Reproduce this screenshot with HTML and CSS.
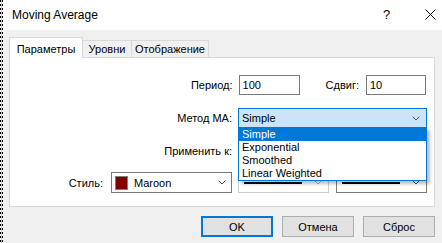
FILE: index.html
```html
<!DOCTYPE html>
<html lang="ru">
<head>
    <meta charset="UTF-8">
    <title>Moving Average</title>
    <link rel="stylesheet" href="styles.css">
</head>
<body>
    <div class="screen">
        <div class="edge"></div>

        <div class="dialog">
            <div class="titlebar">
                <span class="title">Moving Average</span>
                <span class="help">?</span>
                <span class="close">
                    <svg width="11" height="11" viewBox="0 0 11 11">
                        <path d="M0.5 0.5 L10.5 10.5 M10.5 0.5 L0.5 10.5" stroke="#000" stroke-width="1" fill="none"/>
                    </svg>
                </span>
            </div>

            <div class="content">
                <div class="tabs">
                    <div class="tab active">Параметры</div>
                    <div class="tab">Уровни</div>
                    <div class="tab">Отображение</div>
                </div>

                <div class="panel">
                    <div class="row">
                        <label class="label">Период:</label>
                        <div class="field period">100</div>
                        <label class="label shift-label">Сдвиг:</label>
                        <div class="field shift">10</div>
                    </div>

                    <div class="row">
                        <label class="label">Метод МА:</label>
                        <div class="combo wide focused">
                            <span class="combo-text">Simple</span>
                            <svg class="chevron" width="8" height="5" viewBox="0 0 8 5"><path d="M0.5 0.5 L4 4 L7.5 0.5" stroke="#505050" fill="none"/></svg>

                            <ul class="dropdown">
                                <li class="selected">Simple</li>
                                <li>Exponential</li>
                                <li>Smoothed</li>
                                <li>Linear Weighted</li>
                            </ul>
                        </div>
                    </div>

                    <div class="row">
                        <label class="label">Применить к:</label>
                        <!-- hidden behind the open list -->
                        <div class="combo wide"></div>
                    </div>

                    <div class="row">
                        <label class="label style-label">Стиль:</label>
                        <div class="combo color">
                            <span class="swatch"></span>
                            <span class="combo-text">Maroon</span>
                            <svg class="chevron" width="8" height="5" viewBox="0 0 8 5"><path d="M0.5 0.5 L4 4 L7.5 0.5" stroke="#505050" fill="none"/></svg>
                        </div>
                        <div class="combo line disabled">
                            <span class="line-sample"></span>
                            <svg class="chevron" width="8" height="5" viewBox="0 0 8 5"><path d="M0.5 0.5 L4 4 L7.5 0.5" stroke="#b0b0b0" fill="none"/></svg>
                        </div>
                        <div class="combo line">
                            <span class="line-sample"></span>
                            <svg class="chevron" width="8" height="5" viewBox="0 0 8 5"><path d="M0.5 0.5 L4 4 L7.5 0.5" stroke="#505050" fill="none"/></svg>
                        </div>
                    </div>
                </div>

                <div class="buttons">
                    <button class="btn default">OK</button>
                    <button class="btn">Отмена</button>
                    <button class="btn">Сброс</button>
                </div>
            </div>
        </div>
    </div>
</body>
</html>
```

FILE: styles.css
```css
* {
    margin: 0;
    padding: 0;
    box-sizing: border-box;
}

body {
    font-family: 'Liberation Sans', Arial, sans-serif;
    font-size: 11px;
    color: #000;
    background: #f0f0f0;
    overflow: hidden;
}

.screen {
    display: flex;
    width: 442px;
    height: 243px;
}

/* window edge peeking at the left */
.edge {
    width: 3px;
    background:
        linear-gradient(90deg, transparent 1px, #c8c8c8 1px 2px, transparent 2px),
        repeating-linear-gradient(#000 0 2px, #fff 2px 4px);
}

.dialog {
    flex: 1;
    display: flex;
    flex-direction: column;
    background: #f0f0f0;
}

.titlebar {
    height: 30px;
    background: #fff;
    display: flex;
    align-items: center;
}

.title {
    flex: 1;
    font-size: 12px;
    padding-left: 9px;
    padding-bottom: 1px;
}

.help {
    font-size: 13px;
    width: 11px;
    margin-right: 31px;
    padding-bottom: 2px;
}

.close {
    display: flex;
    width: 17px;
    padding-bottom: 2px;
}

.content {
    padding: 7px 7px 0 6px;
}

/* tabs */
.tabs {
    display: flex;
    align-items: flex-end;
    position: relative;
    z-index: 1;
    margin-bottom: -1px;
}

.tab {
    line-height: 16px;
    border: 1px solid #d9d9d9;
    border-bottom: none;
    border-left: none;
    background: #f0f0f0;
    text-align: center;
    margin-bottom: 1px;
}

.tab:nth-child(2) {
    width: 49px;
}

.tab:nth-child(3) {
    width: 77px;
}

.tab.active {
    width: 74px;
    border-left: 1px solid #d9d9d9;
    background: #fff;
    padding: 3px 0 1px;
    margin-bottom: 0;
}

/* tab page */
.panel {
    background: #fff;
    border: 1px solid #d9d9d9;
    padding: 17px 7px 13px;
}

.row {
    display: flex;
    align-items: center;
    justify-content: flex-end;
    height: 20px;
    margin-bottom: 13px;
}

.row:nth-child(3) {
    margin-bottom: 11px;
}

.row:last-child {
    height: 21px;
    margin-bottom: 0;
}

.label {
    margin-right: 6px;
}

.shift-label {
    margin-left: 26px;
    margin-right: 7px;
}

.style-label {
    margin-right: 8px;
}

.field {
    height: 20px;
    border: 1px solid #7a7a7a;
    padding-left: 3px;
    line-height: 18px;
    background: #fff;
}

.period {
    width: 61px;
}

.shift {
    width: 60px;
    margin-right: 1px;
}

.combo {
    position: relative;
    height: 100%;
    display: flex;
    align-items: center;
    border: 1px solid #7a7a7a;
    background: #fff;
    padding: 0 6px 0 3px;
}

.combo-text {
    flex: 1;
}

.chevron {
    flex-shrink: 0;
}

.wide {
    width: 189px;
}

.focused {
    border-color: #0078d7;
    background: #cce4f7;
}

.color {
    width: 121px;
    margin-right: 6px;
    padding-right: 5px;
}

.swatch {
    width: 13px;
    height: 14px;
    background: #800000;
    border: 1px solid #808080;
    margin-right: 6px;
}

.line {
    width: 91px;
    padding-left: 5px;
}

.line.disabled {
    border-color: #cccccc;
    margin-right: 7px;
}

.line-sample {
    flex: 1;
    height: 2px;
    background: #000;
    margin-right: 12px;
    align-self: flex-start;
    margin-top: 9px;
}

/* open list of the MA method combo */
.dropdown {
    position: absolute;
    top: 100%;
    left: -1px;
    width: 189px;
    list-style: none;
    background: #fff;
    border: 1px solid #0078d7;
    box-shadow: 3px 3px 3px rgba(0, 0, 0, 0.25);
    z-index: 5;
}

.dropdown li {
    height: 13px;
    line-height: 13px;
    padding-left: 3px;
}

.dropdown li.selected {
    background: #0078d7;
    color: #fff;
}

/* bottom buttons */
.buttons {
    display: flex;
    justify-content: flex-end;
    gap: 9px;
    margin-top: 9px;
}

.btn {
    width: 72px;
    height: 21px;
    font-family: inherit;
    font-size: 11px;
    color: #000;
    background: #e1e1e1;
    border: 1px solid #adadad;
}

.btn.default {
    border: 2px solid #0078d7;
}
```
